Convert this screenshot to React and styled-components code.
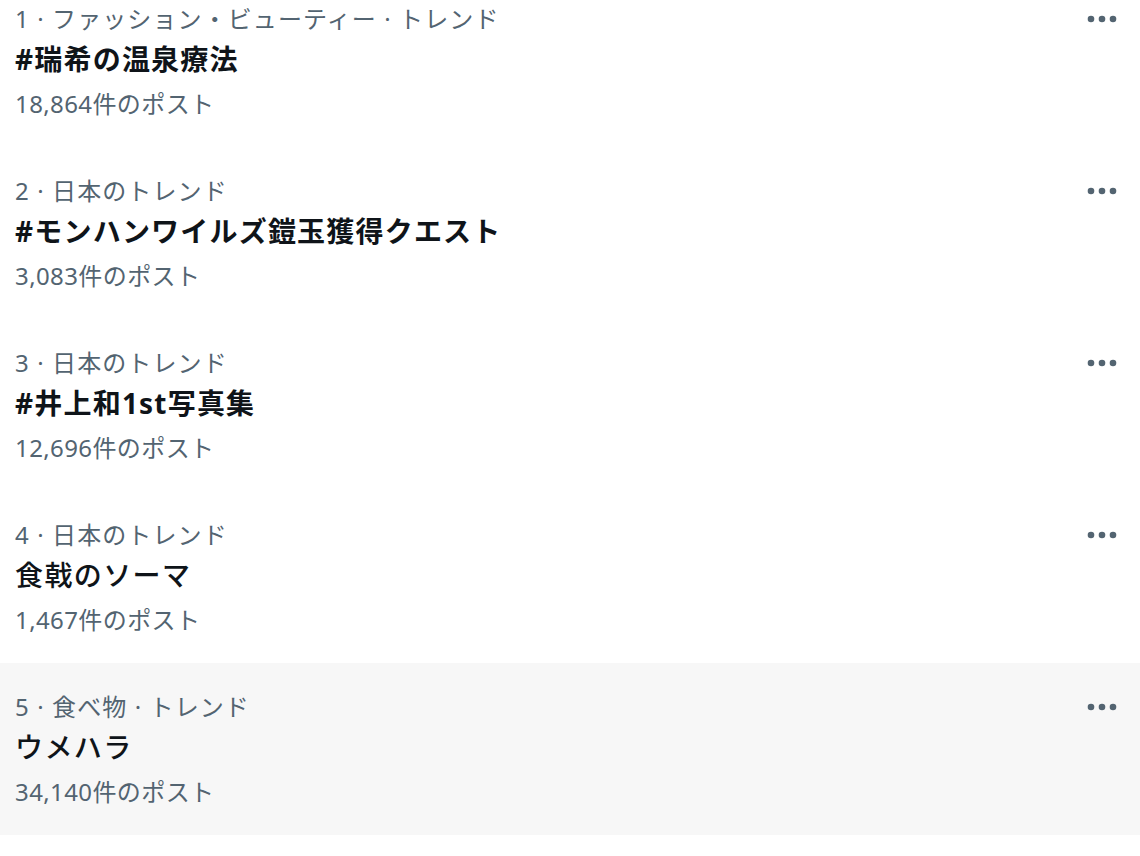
import React from "react";
import styled, { createGlobalStyle } from "styled-components";

const GlobalStyle = createGlobalStyle`
  html, body {
    margin: 0;
    padding: 0;
    background: #ffffff;
    overflow: hidden;
  }
  body {
    font-family: "Noto Sans", "Noto Sans CJK JP", sans-serif;
    -webkit-font-smoothing: antialiased;
  }
`;

const Page = styled.div`
  width: 1140px;
  height: 856px;
  overflow: hidden;
  background: #ffffff;
`;

const List = styled.div`
  display: flex;
  flex-direction: column;
  margin-top: -25px;
`;

const Row = styled.div`
  display: flex;
  align-items: flex-start;
  justify-content: space-between;
  height: 172px;
  box-sizing: border-box;
  padding: 26px 23px 0 15px;
  background: ${(p) => (p.$hover ? "#f7f7f7" : "#ffffff")};
`;

const Texts = styled.div`
  display: flex;
  flex-direction: column;
`;

const Category = styled.div`
  font-size: 24px;
  line-height: 36px;
  letter-spacing: 1.1px;
  color: #536471;
  white-space: nowrap;
`;

const Title = styled.div`
  margin-top: 2px;
  font-size: 28px;
  line-height: 40px;
  letter-spacing: ${(p) => (p.$strong ? "1.2px" : "1.4px")};
  font-weight: ${(p) => (p.$strong ? 700 : 500)};
  color: #0f1419;
  white-space: nowrap;
`;

const Count = styled.div`
  margin-top: 7px;
  font-size: 24px;
  line-height: 36px;
  letter-spacing: 0.4px;
  color: #536471;
  white-space: nowrap;
`;

const MoreButton = styled.div`
  display: flex;
  align-items: center;
  justify-content: center;
  height: 36px;
  color: #536471;
`;

const MoreIcon = () => (
  <svg width="30" height="8" viewBox="0 0 30 8" fill="currentColor">
    <circle cx="4" cy="4" r="3.3" />
    <circle cx="15" cy="4" r="3.3" />
    <circle cx="26" cy="4" r="3.3" />
  </svg>
);

const trends = [
  { cat: "1 · ファッション・ビューティー · トレンド", title: "#瑞希の温泉療法", count: "18,864件のポスト" },
  { cat: "2 · 日本のトレンド", title: "#モンハンワイルズ鎧玉獲得クエスト", count: "3,083件のポスト" },
  { cat: "3 · 日本のトレンド", title: "#井上和1st写真集", count: "12,696件のポスト" },
  { cat: "4 · 日本のトレンド", title: "食戟のソーマ", count: "1,467件のポスト" },
  { cat: "5 · 食べ物 · トレンド", title: "ウメハラ", count: "34,140件のポスト", hover: true },
];

export default function App() {
  return (
    <Page>
      <GlobalStyle />
      <List>
        {trends.map((t) => (
          <Row key={t.title} $hover={t.hover}>
            <Texts>
              <Category>{t.cat}</Category>
              <Title $strong={t.title.startsWith("#")}>{t.title}</Title>
              <Count>{t.count}</Count>
            </Texts>
            <MoreButton>
              <MoreIcon />
            </MoreButton>
          </Row>
        ))}
      </List>
    </Page>
  );
}
